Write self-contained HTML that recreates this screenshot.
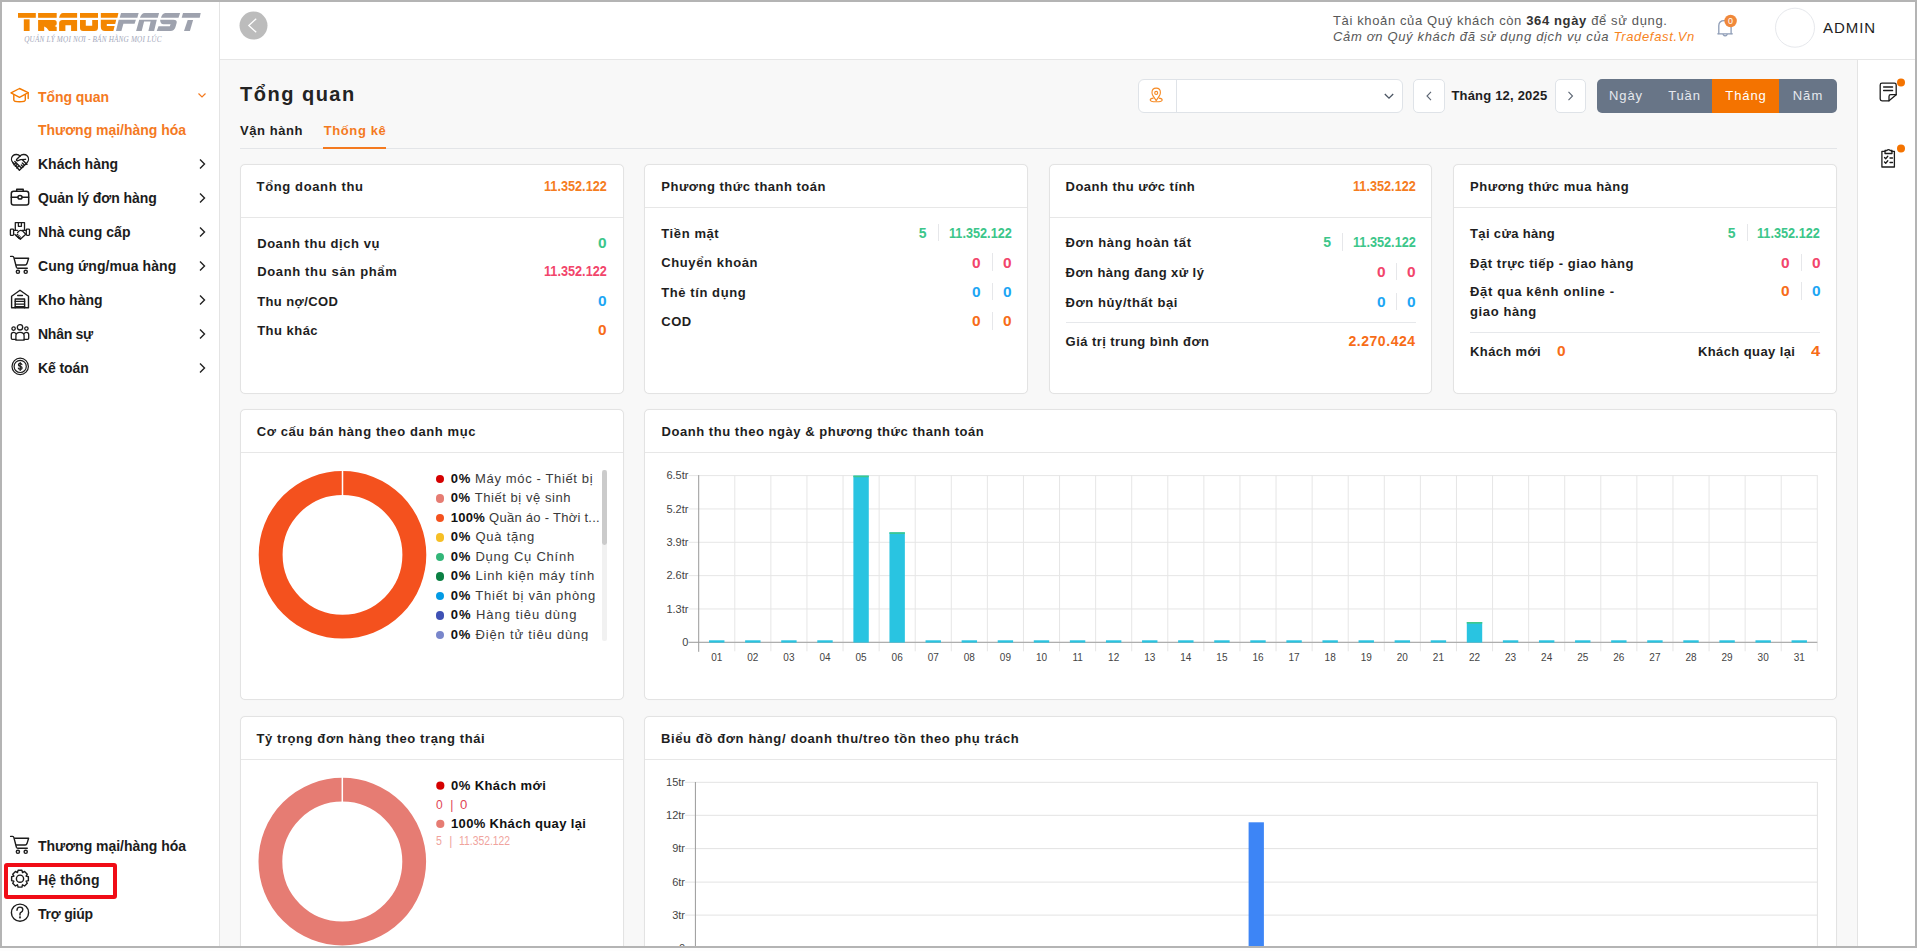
<!DOCTYPE html>
<html><head><meta charset="utf-8">
<style>
html,body{margin:0;padding:0;}
body{width:1917px;height:951px;position:relative;overflow:hidden;background:#fff;font-family:"Liberation Sans", sans-serif;}
.t{position:absolute;line-height:1;white-space:nowrap;}
svg.ov{position:absolute;left:0;top:0;}
</style></head><body>
<div style="position:absolute;left:220px;top:59px;width:1637px;height:889px;background:#f8f8f8;"></div>
<div style="position:absolute;left:220px;top:2px;width:1695px;height:57px;background:#fff;border-bottom:1px solid #e6e6e6;"></div>
<div style="position:absolute;left:2px;top:2px;width:217px;height:946px;background:#fff;border-right:1px solid #e4e4e4;"></div>
<div style="position:absolute;left:1857px;top:60px;width:58px;height:888px;background:#fff;border-left:1px solid #e4e4e4;"></div>
<div style="position:absolute;left:24.2px;top:37.4px;font-family:'Liberation Serif',serif;font-style:italic;font-size:7.2px;line-height:1;color:#a3a8bb;white-space:nowrap;letter-spacing:0.19px">QUẢN LÝ MỌI NƠI - BÁN HÀNG MỌI LÚC</div>
<div class="t" style="left:38.00px;top:90.05px;font-size:14px;font-weight:700;color:#f47a1f;letter-spacing:-0.061px;">Tổng quan</div>
<div class="t" style="left:38.00px;top:123.05px;font-size:14px;font-weight:700;color:#f47a1f;letter-spacing:-0.022px;">Thương mại/hàng hóa</div>
<div class="t" style="left:38.00px;top:156.75px;font-size:14px;font-weight:700;color:#1c1c1c;letter-spacing:-0.013px;">Khách hàng</div>
<div class="t" style="left:38.00px;top:190.75px;font-size:14px;font-weight:700;color:#1c1c1c;letter-spacing:-0.058px;">Quản lý đơn hàng</div>
<div class="t" style="left:38.00px;top:224.75px;font-size:14px;font-weight:700;color:#1c1c1c;letter-spacing:0.059px;">Nhà cung cấp</div>
<div class="t" style="left:38.00px;top:258.75px;font-size:14px;font-weight:700;color:#1c1c1c;letter-spacing:0.088px;">Cung ứng/mua hàng</div>
<div class="t" style="left:38.00px;top:292.75px;font-size:14px;font-weight:700;color:#1c1c1c;letter-spacing:-0.006px;">Kho hàng</div>
<div class="t" style="left:38.00px;top:326.75px;font-size:14px;font-weight:700;color:#1c1c1c;letter-spacing:-0.261px;">Nhân sự</div>
<div class="t" style="left:38.00px;top:360.75px;font-size:14px;font-weight:700;color:#1c1c1c;letter-spacing:-0.106px;">Kế toán</div>
<div class="t" style="left:38.00px;top:839.05px;font-size:14px;font-weight:700;color:#1c1c1c;letter-spacing:-0.022px;">Thương mại/hàng hóa</div>
<div class="t" style="left:38.00px;top:873.05px;font-size:14px;font-weight:700;color:#1c1c1c;letter-spacing:0.130px;">Hệ thống</div>
<div class="t" style="left:38.00px;top:907.25px;font-size:14px;font-weight:700;color:#1c1c1c;letter-spacing:-0.228px;">Trợ giúp</div>
<div style="position:absolute;left:4px;top:862.5px;width:113px;height:36px;box-sizing:border-box;border:4px solid #f00c16;border-radius:3px;"></div>
<div class="t" style="left:1333.00px;top:14.00px;font-size:13px;font-weight:400;color:#585858;letter-spacing:0.629px;">Tài khoản của Quý khách còn <b style="color:#333">364 ngày</b> để sử dụng.</div>
<div class="t" style="left:1333.00px;top:29.50px;font-size:13px;font-weight:400;color:#585858;letter-spacing:0.667px;font-style:italic;">Cảm ơn Quý khách đã sử dụng dịch vụ của <span style="color:#f7841e">Tradefast.Vn</span></div>
<div class="t" style="left:1823.00px;top:20.10px;font-size:15px;font-weight:400;color:#1e1e1e;letter-spacing:0.931px;">ADMIN</div>
<div class="t" style="left:240.00px;top:84.07px;font-size:20px;font-weight:700;color:#232323;letter-spacing:1.500px;">Tổng quan</div>
<div class="t" style="left:240.00px;top:123.70px;font-size:13px;font-weight:700;color:#1e1e1e;letter-spacing:0.561px;">Vận hành</div>
<div class="t" style="left:323.70px;top:123.70px;font-size:13px;font-weight:700;color:#f47a1f;letter-spacing:0.615px;">Thống kê</div>
<div style="position:absolute;left:240px;top:148px;width:1597px;height:1px;background:#e3e5e8;"></div>
<div style="position:absolute;left:323px;top:147px;width:63px;height:2px;background:#f47a1f;"></div>
<div style="position:absolute;left:1138px;top:79px;width:265px;height:34px;box-sizing:border-box;background:#fff;border:1px solid #dfe3e8;border-radius:6px;"></div>
<div style="position:absolute;left:1176px;top:80px;width:1px;height:32px;background:#dfe3e8;"></div>
<div style="position:absolute;left:1413px;top:79px;width:32px;height:34px;box-sizing:border-box;background:#fff;border:1px solid #dfe3e8;border-radius:5px;"></div>
<div style="position:absolute;left:1555px;top:79px;width:31px;height:34px;box-sizing:border-box;background:#fff;border:1px solid #dfe3e8;border-radius:5px;"></div>
<div class="t" style="left:1451.40px;top:88.60px;font-size:13px;font-weight:700;color:#1e1e1e;letter-spacing:0.199px;">Tháng 12, 2025</div>
<div style="position:absolute;left:1597px;top:79px;width:240px;height:34px;background:#687587;border-radius:5px;overflow:hidden;"></div>
<div style="position:absolute;left:1712px;top:79px;width:67px;height:34px;background:#f47300;"></div>
<div class="t" style="left:1609.00px;top:89.00px;font-size:13px;font-weight:400;color:#e6e9ee;letter-spacing:0.911px;">Ngày</div>
<div class="t" style="left:1668.17px;top:89.00px;font-size:13px;font-weight:400;color:#e6e9ee;letter-spacing:0.875px;">Tuần</div>
<div class="t" style="left:1725.35px;top:89.00px;font-size:13px;font-weight:400;color:#ffffff;letter-spacing:0.885px;">Tháng</div>
<div class="t" style="left:1792.63px;top:89.00px;font-size:13px;font-weight:400;color:#e6e9ee;letter-spacing:1.098px;">Năm</div>
<div style="position:absolute;left:240px;top:164px;width:384px;height:230px;box-sizing:border-box;background:#fff;border:1px solid #e3e3e3;border-radius:5px;box-shadow:0 0 1px rgba(0,0,0,0.06);"></div>
<div style="position:absolute;left:241px;top:217px;width:382px;height:1px;background:#e7e7e7;"></div>
<div style="position:absolute;left:644px;top:164px;width:384px;height:230px;box-sizing:border-box;background:#fff;border:1px solid #e3e3e3;border-radius:5px;box-shadow:0 0 1px rgba(0,0,0,0.06);"></div>
<div style="position:absolute;left:645px;top:207px;width:382px;height:1px;background:#e7e7e7;"></div>
<div style="position:absolute;left:1049px;top:164px;width:383px;height:230px;box-sizing:border-box;background:#fff;border:1px solid #e3e3e3;border-radius:5px;box-shadow:0 0 1px rgba(0,0,0,0.06);"></div>
<div style="position:absolute;left:1050px;top:217px;width:381px;height:1px;background:#e7e7e7;"></div>
<div style="position:absolute;left:1453px;top:164px;width:384px;height:230px;box-sizing:border-box;background:#fff;border:1px solid #e3e3e3;border-radius:5px;box-shadow:0 0 1px rgba(0,0,0,0.06);"></div>
<div style="position:absolute;left:1454px;top:207px;width:382px;height:1px;background:#e7e7e7;"></div>
<div class="t" style="left:256.60px;top:179.60px;font-size:13px;font-weight:700;color:#1e1e1e;letter-spacing:0.628px;">Tổng doanh thu</div>
<div class="t" style="left:543.60px;top:178.75px;font-size:14px;font-weight:700;color:#f57d1f;transform:scaleX(0.9062);transform-origin:left;">11.352.122</div>
<div class="t" style="left:257.20px;top:236.70px;font-size:13px;font-weight:700;color:#1e1e1e;letter-spacing:0.553px;">Doanh thu dịch vụ</div>
<div class="t" style="left:597.80px;top:235.85px;font-size:14px;font-weight:700;color:#3cc68a;transform:scaleX(1.103);transform-origin:left;">0</div>
<div class="t" style="left:257.20px;top:265.10px;font-size:13px;font-weight:700;color:#1e1e1e;letter-spacing:0.647px;">Doanh thu sản phẩm</div>
<div class="t" style="left:543.60px;top:264.25px;font-size:14px;font-weight:700;color:#f2456b;transform:scaleX(0.9062);transform-origin:left;">11.352.122</div>
<div class="t" style="left:257.20px;top:294.80px;font-size:13px;font-weight:700;color:#1e1e1e;letter-spacing:0.397px;">Thu nợ/COD</div>
<div class="t" style="left:597.80px;top:293.95px;font-size:14px;font-weight:700;color:#1ea6f4;transform:scaleX(1.103);transform-origin:left;">0</div>
<div class="t" style="left:257.20px;top:323.80px;font-size:13px;font-weight:700;color:#1e1e1e;letter-spacing:0.478px;">Thu khác</div>
<div class="t" style="left:597.80px;top:322.95px;font-size:14px;font-weight:700;color:#f76c17;transform:scaleX(1.103);transform-origin:left;">0</div>
<div class="t" style="left:661.30px;top:179.60px;font-size:13px;font-weight:700;color:#1e1e1e;letter-spacing:0.498px;">Phương thức thanh toán</div>
<div class="t" style="left:661.30px;top:226.60px;font-size:13px;font-weight:700;color:#1e1e1e;letter-spacing:0.598px;">Tiền mặt</div>
<div class="t" style="left:948.50px;top:225.75px;font-size:14px;font-weight:700;color:#3cc68a;transform:scaleX(0.9062);transform-origin:left;">11.352.122</div>
<div style="position:absolute;left:937.8px;top:223.6px;width:1px;height:17.5px;background:#e6e7ea;"></div>
<div class="t" style="left:918.80px;top:225.75px;font-size:14px;font-weight:700;color:#3cc68a;">5</div>
<div class="t" style="left:661.30px;top:256.40px;font-size:13px;font-weight:700;color:#1e1e1e;letter-spacing:0.602px;">Chuyển khoản</div>
<div class="t" style="left:1002.70px;top:255.55px;font-size:14px;font-weight:700;color:#f2456b;transform:scaleX(1.103);transform-origin:left;">0</div>
<div style="position:absolute;left:992.0px;top:253.39999999999998px;width:1px;height:17.5px;background:#e6e7ea;"></div>
<div class="t" style="left:972.40px;top:255.55px;font-size:14px;font-weight:700;color:#f2456b;transform:scaleX(1.103);transform-origin:left;">0</div>
<div class="t" style="left:661.30px;top:285.50px;font-size:13px;font-weight:700;color:#1e1e1e;letter-spacing:0.576px;">Thẻ tín dụng</div>
<div class="t" style="left:1002.70px;top:284.65px;font-size:14px;font-weight:700;color:#1ea6f4;transform:scaleX(1.103);transform-origin:left;">0</div>
<div style="position:absolute;left:992.0px;top:282.5px;width:1px;height:17.5px;background:#e6e7ea;"></div>
<div class="t" style="left:972.40px;top:284.65px;font-size:14px;font-weight:700;color:#1ea6f4;transform:scaleX(1.103);transform-origin:left;">0</div>
<div class="t" style="left:661.30px;top:315.00px;font-size:13px;font-weight:700;color:#1e1e1e;letter-spacing:0.470px;">COD</div>
<div class="t" style="left:1002.70px;top:314.15px;font-size:14px;font-weight:700;color:#f76c17;transform:scaleX(1.103);transform-origin:left;">0</div>
<div style="position:absolute;left:992.0px;top:312px;width:1px;height:17.5px;background:#e6e7ea;"></div>
<div class="t" style="left:972.40px;top:314.15px;font-size:14px;font-weight:700;color:#f76c17;transform:scaleX(1.103);transform-origin:left;">0</div>
<div class="t" style="left:1065.60px;top:179.60px;font-size:13px;font-weight:700;color:#1e1e1e;letter-spacing:0.472px;">Doanh thu ước tính</div>
<div class="t" style="left:1352.90px;top:178.75px;font-size:14px;font-weight:700;color:#f57d1f;transform:scaleX(0.9062);transform-origin:left;">11.352.122</div>
<div class="t" style="left:1065.60px;top:236.30px;font-size:13px;font-weight:700;color:#1e1e1e;letter-spacing:0.623px;">Đơn hàng hoàn tất</div>
<div class="t" style="left:1352.90px;top:235.45px;font-size:14px;font-weight:700;color:#3cc68a;transform:scaleX(0.9062);transform-origin:left;">11.352.122</div>
<div style="position:absolute;left:1342.2px;top:233.3px;width:1px;height:17.5px;background:#e6e7ea;"></div>
<div class="t" style="left:1323.20px;top:235.45px;font-size:14px;font-weight:700;color:#3cc68a;">5</div>
<div class="t" style="left:1065.60px;top:265.50px;font-size:13px;font-weight:700;color:#1e1e1e;letter-spacing:0.426px;">Đơn hàng đang xử lý</div>
<div class="t" style="left:1407.10px;top:264.65px;font-size:14px;font-weight:700;color:#f2456b;transform:scaleX(1.103);transform-origin:left;">0</div>
<div style="position:absolute;left:1396.4px;top:262.5px;width:1px;height:17.5px;background:#e6e7ea;"></div>
<div class="t" style="left:1376.80px;top:264.65px;font-size:14px;font-weight:700;color:#f2456b;transform:scaleX(1.103);transform-origin:left;">0</div>
<div class="t" style="left:1065.60px;top:295.50px;font-size:13px;font-weight:700;color:#1e1e1e;letter-spacing:0.572px;">Đơn hủy/thất bại</div>
<div class="t" style="left:1407.10px;top:294.65px;font-size:14px;font-weight:700;color:#1ea6f4;transform:scaleX(1.103);transform-origin:left;">0</div>
<div style="position:absolute;left:1396.4px;top:292.5px;width:1px;height:17.5px;background:#e6e7ea;"></div>
<div class="t" style="left:1376.80px;top:294.65px;font-size:14px;font-weight:700;color:#1ea6f4;transform:scaleX(1.103);transform-origin:left;">0</div>
<div style="position:absolute;left:1065.5px;top:321.5px;width:350.5px;height:1px;background:#e6e8eb;"></div>
<div class="t" style="left:1065.60px;top:335.20px;font-size:13px;font-weight:700;color:#1e1e1e;letter-spacing:0.442px;">Giá trị trung bình đơn</div>
<div class="t" style="left:1348.40px;top:334.35px;font-size:14px;font-weight:700;color:#f76c17;letter-spacing:0.556px;">2.270.424</div>
<div class="t" style="left:1470.10px;top:180.00px;font-size:13px;font-weight:700;color:#1e1e1e;letter-spacing:0.526px;">Phương thức mua hàng</div>
<div class="t" style="left:1470.10px;top:226.70px;font-size:13px;font-weight:700;color:#1e1e1e;letter-spacing:0.339px;">Tại cửa hàng</div>
<div class="t" style="left:1757.40px;top:225.85px;font-size:14px;font-weight:700;color:#3cc68a;transform:scaleX(0.9062);transform-origin:left;">11.352.122</div>
<div style="position:absolute;left:1746.7px;top:223.7px;width:1px;height:17.5px;background:#e6e7ea;"></div>
<div class="t" style="left:1727.70px;top:225.85px;font-size:14px;font-weight:700;color:#3cc68a;">5</div>
<div class="t" style="left:1470.10px;top:256.80px;font-size:13px;font-weight:700;color:#1e1e1e;letter-spacing:0.549px;">Đặt trực tiếp - giao hàng</div>
<div class="t" style="left:1811.60px;top:255.95px;font-size:14px;font-weight:700;color:#f2456b;transform:scaleX(1.103);transform-origin:left;">0</div>
<div style="position:absolute;left:1800.9px;top:253.8px;width:1px;height:17.5px;background:#e6e7ea;"></div>
<div class="t" style="left:1781.30px;top:255.95px;font-size:14px;font-weight:700;color:#f2456b;transform:scaleX(1.103);transform-origin:left;">0</div>
<div class="t" style="left:1470.10px;top:285.20px;font-size:13px;font-weight:700;color:#1e1e1e;letter-spacing:0.621px;">Đặt qua kênh online -</div>
<div class="t" style="left:1811.60px;top:284.35px;font-size:14px;font-weight:700;color:#1ea6f4;transform:scaleX(1.103);transform-origin:left;">0</div>
<div style="position:absolute;left:1800.9px;top:282.2px;width:1px;height:17.5px;background:#e6e7ea;"></div>
<div class="t" style="left:1781.30px;top:284.35px;font-size:14px;font-weight:700;color:#f76c17;transform:scaleX(1.103);transform-origin:left;">0</div>
<div class="t" style="left:1470.10px;top:304.70px;font-size:13px;font-weight:700;color:#1e1e1e;letter-spacing:0.590px;">giao hàng</div>
<div style="position:absolute;left:1469.7px;top:331.5px;width:350.5px;height:1px;background:#e6e8eb;"></div>
<div class="t" style="left:1470.10px;top:345.10px;font-size:13px;font-weight:700;color:#1e1e1e;letter-spacing:0.359px;">Khách mới</div>
<div class="t" style="left:1557.20px;top:344.25px;font-size:14px;font-weight:700;color:#f76c17;transform:scaleX(1.103);transform-origin:left;">0</div>
<div class="t" style="left:1698.00px;top:345.10px;font-size:13px;font-weight:700;color:#1e1e1e;letter-spacing:0.396px;">Khách quay lại</div>
<div class="t" style="left:1810.80px;top:344.25px;font-size:14px;font-weight:700;color:#f76c17;transform:scaleX(1.180);transform-origin:left;">4</div>
<div style="position:absolute;left:240px;top:409px;width:384px;height:291px;box-sizing:border-box;background:#fff;border:1px solid #e3e3e3;border-radius:5px;box-shadow:0 0 1px rgba(0,0,0,0.06);"></div>
<div style="position:absolute;left:241px;top:452px;width:382px;height:1px;background:#e7e7e7;"></div>
<div style="position:absolute;left:644px;top:409px;width:1193px;height:291px;box-sizing:border-box;background:#fff;border:1px solid #e3e3e3;border-radius:5px;box-shadow:0 0 1px rgba(0,0,0,0.06);"></div>
<div style="position:absolute;left:645px;top:452px;width:1191px;height:1px;background:#e7e7e7;"></div>
<div class="t" style="left:256.70px;top:424.90px;font-size:13px;font-weight:700;color:#1e1e1e;letter-spacing:0.597px;">Cơ cấu bán hàng theo danh mục</div>
<div class="t" style="left:661.50px;top:424.90px;font-size:13px;font-weight:700;color:#1e1e1e;letter-spacing:0.544px;">Doanh thu theo ngày &amp; phương thức thanh toán</div>
<div style="position:absolute;left:430px;top:469px;width:172px;height:172px;overflow:hidden;">
<div style="position:absolute;left:5.800000000000011px;top:6.00px;width:8.4px;height:8.4px;border-radius:50%;background:#d50000"></div>
<div class="t" style="left:20.80px;top:3.00px;font-size:13px;font-weight:400;color:#3a3a3a;letter-spacing:0.634px;"><b style="color:#111">0%</b> Máy móc - Thiết bị</div>
<div style="position:absolute;left:5.800000000000011px;top:25.47px;width:8.4px;height:8.4px;border-radius:50%;background:#e67c73"></div>
<div class="t" style="left:20.80px;top:22.47px;font-size:13px;font-weight:400;color:#3a3a3a;letter-spacing:0.563px;"><b style="color:#111">0%</b> Thiết bị vệ sinh</div>
<div style="position:absolute;left:5.800000000000011px;top:44.94px;width:8.4px;height:8.4px;border-radius:50%;background:#f4511e"></div>
<div class="t" style="left:20.80px;top:41.94px;font-size:13px;font-weight:400;color:#3a3a3a;letter-spacing:0.271px;"><b style="color:#111">100%</b> Quần áo - Thời t...</div>
<div style="position:absolute;left:5.800000000000011px;top:64.41px;width:8.4px;height:8.4px;border-radius:50%;background:#f6bf26"></div>
<div class="t" style="left:20.80px;top:61.41px;font-size:13px;font-weight:400;color:#3a3a3a;letter-spacing:0.763px;"><b style="color:#111">0%</b> Quà tặng</div>
<div style="position:absolute;left:5.800000000000011px;top:83.88px;width:8.4px;height:8.4px;border-radius:50%;background:#33b679"></div>
<div class="t" style="left:20.80px;top:80.88px;font-size:13px;font-weight:400;color:#3a3a3a;letter-spacing:0.754px;"><b style="color:#111">0%</b> Dụng Cụ Chính</div>
<div style="position:absolute;left:5.800000000000011px;top:103.35px;width:8.4px;height:8.4px;border-radius:50%;background:#0b8043"></div>
<div class="t" style="left:20.80px;top:100.35px;font-size:13px;font-weight:400;color:#3a3a3a;letter-spacing:0.780px;"><b style="color:#111">0%</b> Linh kiện máy tính</div>
<div style="position:absolute;left:5.800000000000011px;top:122.82px;width:8.4px;height:8.4px;border-radius:50%;background:#039be5"></div>
<div class="t" style="left:20.80px;top:119.82px;font-size:13px;font-weight:400;color:#3a3a3a;letter-spacing:0.769px;"><b style="color:#111">0%</b> Thiết bị văn phòng</div>
<div style="position:absolute;left:5.800000000000011px;top:142.29px;width:8.4px;height:8.4px;border-radius:50%;background:#3f51b5"></div>
<div class="t" style="left:20.80px;top:139.29px;font-size:13px;font-weight:400;color:#3a3a3a;letter-spacing:0.936px;"><b style="color:#111">0%</b> Hàng tiêu dùng</div>
<div style="position:absolute;left:5.800000000000011px;top:161.76px;width:8.4px;height:8.4px;border-radius:50%;background:#7986cb"></div>
<div class="t" style="left:20.80px;top:158.76px;font-size:13px;font-weight:400;color:#3a3a3a;letter-spacing:0.801px;"><b style="color:#111">0%</b> Điện tử tiêu dùng</div>
</div>
<div style="position:absolute;left:602.3px;top:469.5px;width:4.8px;height:171.5px;background:#f1f1f1;border-radius:2px;"></div>
<div style="position:absolute;left:602.3px;top:469.5px;width:4.8px;height:75px;background:#cbcbcb;border-radius:2.4px;"></div>
<div style="position:absolute;left:240px;top:716px;width:384px;height:260px;box-sizing:border-box;background:#fff;border:1px solid #e3e3e3;border-radius:5px;box-shadow:0 0 1px rgba(0,0,0,0.06);"></div>
<div style="position:absolute;left:241px;top:759px;width:382px;height:1px;background:#e7e7e7;"></div>
<div style="position:absolute;left:644px;top:716px;width:1193px;height:260px;box-sizing:border-box;background:#fff;border:1px solid #e3e3e3;border-radius:5px;box-shadow:0 0 1px rgba(0,0,0,0.06);"></div>
<div style="position:absolute;left:645px;top:759px;width:1191px;height:1px;background:#e7e7e7;"></div>
<div class="t" style="left:256.40px;top:731.80px;font-size:13px;font-weight:700;color:#1e1e1e;letter-spacing:0.594px;">Tỷ trọng đơn hàng theo trạng thái</div>
<div class="t" style="left:661.00px;top:731.60px;font-size:13px;font-weight:700;color:#1e1e1e;letter-spacing:0.616px;">Biểu đồ đơn hàng/ doanh thu/treo tồn theo phụ trách</div>
<div class="t" style="left:451.00px;top:778.60px;font-size:13px;font-weight:700;color:#111;letter-spacing:0.429px;">0% Khách mới</div>
<div class="t" style="left:436.00px;top:798.64px;font-size:12px;font-weight:400;color:#df4454;">0</div>
<div class="t" style="left:450.30px;top:798.64px;font-size:12px;font-weight:400;color:#df4454;">|</div>
<div class="t" style="left:460.20px;top:798.64px;font-size:12px;font-weight:400;color:#df4454;transform:scaleX(1.092);transform-origin:left;">0</div>
<div class="t" style="left:451.00px;top:816.50px;font-size:13px;font-weight:700;color:#111;letter-spacing:0.346px;">100% Khách quay lại</div>
<div class="t" style="left:436.00px;top:835.44px;font-size:12px;font-weight:400;color:#f0a39d;transform:scaleX(0.882);transform-origin:left;">5</div>
<div class="t" style="left:449.20px;top:835.44px;font-size:12px;font-weight:400;color:#f0a39d;">|</div>
<div class="t" style="left:458.80px;top:835.44px;font-size:12px;font-weight:400;color:#f0a39d;transform:scaleX(0.8636);transform-origin:left;">11.352.122</div>
<svg class="ov" width="1917" height="951" viewBox="0 0 1917 951">
<g fill="#f38600">
<rect x="18" y="13" width="17.8" height="4.8"/>
<rect x="23.8" y="19.3" width="5.8" height="11.7"/>
<rect x="38.1" y="13" width="18.6" height="4.8"/>
<path d="M38.1 20.1 H54.2 Q56.7 20.1 56.7 22.6 V24 Q56.7 25.6 54.6 26 L56.7 27 V31 H49 Q47 27.5 44.2 26.6 V31 H38.1 Z"/>
<path d="M63 13 H77.1 V17.8 H59.1 Q60 13.2 63 13 Z"/>
<path d="M62.5 20.1 H77.1 V31 H71.1 V25.3 H65.4 V31 H59.1 V23.6 Q59.1 20.1 62.5 20.1 Z"/>
<rect x="80" y="13" width="18" height="4.8"/>
<path d="M80 20.1 H85.8 V25.8 H92.2 V20.1 H98 V27.5 Q98 31 94.5 31 H83 Q80 31 80 28 Z"/>
<path d="M100.8 13.1 H118.4 L117.4 17.8 H100.8 Z"/>
<path d="M100.8 19.85 H116.2 L115.2 23.9 H106.8 V26 H114.6 L113.4 30.9 H105 Q100.8 30.9 100.8 26.7 Z"/>
</g>
<g fill="#9ea2ae">
<path d="M121 13.1 H138.6 L137.4 17.8 H119.7 Z"/>
<path d="M118.7 19.85 H135.9 L134.6 23.7 H123.4 L121.4 30.9 H116 Z"/>
<path d="M144.7 13.1 H159.1 L157.8 17.8 H139.9 Q141.5 13.3 144.7 13.1 Z"/>
<path d="M139.2 19.85 H156.8 L154.1 30.9 H148.4 L150.6 21.6 H144.1 L141.7 30.9 H136.1 Z"/>
<path d="M165.2 13.1 H180.1 L178.5 17.7 H161 Q162.3 13.4 165.2 13.1 Z"/>
<path d="M160.1 19.8 H173.4 Q177.2 19.8 176.7 22.8 L175.4 27.3 Q174.3 30.9 170.5 30.9 H156.7 L158.5 26.2 H169.8 L170.6 24.3 H163.6 Q160.3 24.3 160.1 19.8 Z"/>
<path d="M183 13.1 H200.7 L199.7 17.7 H181.7 Z"/>
<path d="M187.7 20.1 H193.1 L189.9 30.9 H184 Z"/>
</g>
<path d="M198.5 93.5 L202 97 L205.5 93.5" fill="none" stroke="#f47a1f" stroke-width="1.2"/>
<path d="M200 159.5 L204.5 164 L200 168.5" fill="none" stroke="#222" stroke-width="1.4"/>
<path d="M200 193.5 L204.5 198 L200 202.5" fill="none" stroke="#222" stroke-width="1.4"/>
<path d="M200 227.5 L204.5 232 L200 236.5" fill="none" stroke="#222" stroke-width="1.4"/>
<path d="M200 261.5 L204.5 266 L200 270.5" fill="none" stroke="#222" stroke-width="1.4"/>
<path d="M200 295.5 L204.5 300 L200 304.5" fill="none" stroke="#222" stroke-width="1.4"/>
<path d="M200 329.5 L204.5 334 L200 338.5" fill="none" stroke="#222" stroke-width="1.4"/>
<path d="M200 363.5 L204.5 368 L200 372.5" fill="none" stroke="#222" stroke-width="1.4"/>
<g fill="none" stroke="#f47a00" stroke-width="1.4" stroke-linejoin="round" stroke-linecap="round"><path d="M19.5 88.5 L28.2 92.6 L19.5 97.3 L11 92.9 Z"/><path d="M13.8 95 V100 Q13.8 101.8 19.5 101.8 Q25.3 101.8 25.3 100 V95"/><path d="M28.2 92.6 V98.5"/></g>
<g transform="translate(8,151)" fill="none" stroke="#1c1c1c" stroke-width="1.35" stroke-linecap="round" stroke-linejoin="round"><path d="M12 5 C10.3 3.2 6.8 2.9 4.9 4.8 C3 6.7 3.1 9.8 5 11.8"/><path d="M12 5 C13.7 3.2 17.2 2.9 19.1 4.8 C21 6.7 20.9 9.8 19 11.8 L18.3 12.6"/><path d="M12 5 L8.6 8.4 Q8.1 9.6 9.4 9.8 L12.6 8.7 L17.6 8.3"/><path d="M14.6 9 L19 13.4 M6.8 10.4 L13.6 17.2 M5 11.8 L11.4 19.2 L13.2 17.6 L18.3 12.6"/><path d="M5.9 13.7 L7.6 12 M7.3 15.3 L9 13.6 M8.8 17 L10.5 15.3 M14.3 12.1 L16.5 14.3 M13.3 14 L15.2 15.9"/></g>
<g transform="translate(8,185)" fill="none" stroke="#1c1c1c" stroke-width="1.5" stroke-linecap="round" stroke-linejoin="round"><rect x="3.3" y="6.2" width="17.4" height="13.8" rx="2.3"/><path d="M8.7 6.2 V4.2 H15.2 V6.2"/><path d="M3.3 12.2 H9.8 M14.2 12.2 H20.7"/><ellipse cx="12" cy="12.2" rx="2.1" ry="1.8"/></g>
<g transform="translate(8,219)" fill="none" stroke="#1c1c1c" stroke-width="1.3" stroke-linecap="round" stroke-linejoin="round"><path d="M7.3 10.9 V3.6 H16.5 V10.9"/><path d="M10.4 3.6 V7.3 H13.4 V3.6"/><rect x="2.4" y="10.2" width="3.2" height="6.2" rx="0.8"/><rect x="18.3" y="10.2" width="3.2" height="6.2" rx="0.8"/><path d="M5.6 11.3 H9.5 M14 11.3 H18.3"/><path d="M9.6 13.6 Q11.5 10.3 14.5 11.9 L17.8 15.3 L12.3 20.3 L6.9 15.4"/><path d="M8.3 16.8 L9.8 15.3 M9.6 18.1 L11.1 16.6 M10.9 19.3 L12.3 17.9"/></g>
<g transform="translate(8,253)" fill="none" stroke="#1c1c1c" stroke-width="1.4" stroke-linecap="round" stroke-linejoin="round"><path d="M2.6 3.4 H4.6 Q5.6 3.4 5.9 4.6 L8.4 14.2 Q8.8 15.2 9.8 15.2 H19.3"/><path d="M6.8 5.2 H20.6 L19 10.6 Q18.5 12 17.2 12 H8.4"/><circle cx="9.9" cy="18.8" r="1.6"/><circle cx="17.7" cy="18.8" r="1.6"/></g>
<g transform="translate(8,833)" fill="none" stroke="#1c1c1c" stroke-width="1.4" stroke-linecap="round" stroke-linejoin="round"><path d="M2.6 3.4 H4.6 Q5.6 3.4 5.9 4.6 L8.4 14.2 Q8.8 15.2 9.8 15.2 H19.3"/><path d="M6.8 5.2 H20.6 L19 10.6 Q18.5 12 17.2 12 H8.4"/><circle cx="9.9" cy="18.8" r="1.6"/><circle cx="17.7" cy="18.8" r="1.6"/></g>
<g transform="translate(8,287)" fill="none" stroke="#1c1c1c" stroke-width="1.4" stroke-linecap="round" stroke-linejoin="round"><path d="M3.6 20.8 V9.2 L12 3.2 L20.5 9.2 V20.8 Z"/><path d="M9.7 8.5 H14.4"/><path d="M7.2 20.8 V12 H16.6 V20.8"/><path d="M7.2 14.4 H16.6 M7.2 17.1 H16.6 M7.2 19.8 H16.6"/></g>
<g transform="translate(8,321)" fill="none" stroke="#1c1c1c" stroke-width="1.3" stroke-linecap="round" stroke-linejoin="round"><circle cx="12" cy="6.3" r="2.7"/><circle cx="5.6" cy="7.6" r="1.7"/><circle cx="18.4" cy="7.6" r="1.7"/><path d="M7.9 19.2 V14.8 Q7.9 11.3 12 11.3 Q16.1 11.3 16.1 14.8 V19.2 Z"/><path d="M7.9 18.3 H4.4 Q3.3 18.3 3.3 17.2 V13.6 Q3.3 11.4 5.6 11.4 Q7.2 11.4 7.9 12.6"/><path d="M16.1 18.3 H19.6 Q20.7 18.3 20.7 17.2 V13.6 Q20.7 11.4 18.4 11.4 Q16.8 11.4 16.1 12.6"/></g>
<g transform="translate(8,355)" fill="none" stroke="#1c1c1c" stroke-width="1.2" stroke-linecap="round" stroke-linejoin="round"><circle cx="12.2" cy="11.4" r="8.2"/><circle cx="12.2" cy="11.4" r="6.1"/><path d="M13.9 9.6 Q13.6 8.4 12.2 8.4 Q10.4 8.4 10.4 9.8 Q10.4 11 12.2 11.3 Q14.1 11.7 14.1 13 Q14.1 14.4 12.2 14.4 Q10.6 14.4 10.3 13.2 M12.2 7.4 V15.4"/></g>
<g transform="translate(8,867)" fill="none" stroke="#1c1c1c" stroke-width="1.4" stroke-linecap="round" stroke-linejoin="round"><path d="M10.07 3.32 L13.93 3.32 L14.53 5.60 L16.56 4.41 L19.29 7.14 L18.10 9.17 L20.38 9.77 L20.38 13.63 L18.10 14.23 L19.29 16.26 L16.56 18.99 L14.53 17.80 L13.93 20.08 L10.07 20.08 L9.47 17.80 L7.44 18.99 L4.71 16.26 L5.90 14.23 L3.62 13.63 L3.62 9.77 L5.90 9.17 L4.71 7.14 L7.44 4.41 L9.47 5.60 Z"/><circle cx="12" cy="11.7" r="3.6"/></g>
<g transform="translate(8,901)" fill="none" stroke="#1c1c1c" stroke-width="1.4" stroke-linecap="round" stroke-linejoin="round"><circle cx="12" cy="11.7" r="8.6"/><path d="M9 9.2 Q9 6.1 12 6.1 Q14.8 6.1 14.8 8.7 Q14.8 10.4 12.6 11.6 Q12 12 12 13 V14"/><circle cx="12" cy="16.4" r="0.4"/></g>
<circle cx="253.5" cy="25.6" r="14" fill="#bcbcbc"/>
<path d="M256.2 18.8 L248.8 25.5 L256.2 32.2" fill="none" stroke="#fff" stroke-width="1.3"/>
<g fill="none" stroke="#8d9cb6" stroke-width="1.3" stroke-linejoin="round" stroke-linecap="round"><path d="M1718.8 33.6 V25.8 Q1718.8 20.6 1724.3 20.6 H1725.6 Q1731.1 20.6 1731.1 25.8 V33.6"/><path d="M1717.8 33.8 H1732.3"/><path d="M1723.2 34.6 Q1725.1 37.3 1727.1 34.6"/></g>
<circle cx="1730.6" cy="21" r="6.2" fill="#f0883a"/>
<text x="1730.6" y="24.3" font-family="Liberation Sans" font-size="9" text-anchor="middle" fill="#fff">0</text>
<circle cx="1795" cy="27.7" r="19.5" fill="#fff" stroke="#e6e8ec" stroke-width="1"/>
<g fill="none" stroke="#f68a24" stroke-width="1.1" stroke-linejoin="round"><path d="M1156.2 100.6 L1152.9 95.6 Q1152 94.2 1152 92.4 Q1152 88.1 1156.2 88.1 Q1160.4 88.1 1160.4 92.4 Q1160.4 94.2 1159.5 95.6 Z"/><circle cx="1156.2" cy="92.9" r="1.5"/><path d="M1153.6 98.1 Q1150.2 98.4 1150.2 100 Q1150.2 101.8 1156.2 101.8 Q1162.2 101.8 1162.2 100 Q1162.2 98.4 1158.8 98.1"/></g>
<path d="M1431 91.8 L1427 96 L1431 100.2" fill="none" stroke="#5b6472" stroke-width="1.1"/>
<path d="M1568.5 91.8 L1572.5 96 L1568.5 100.2" fill="none" stroke="#5b6472" stroke-width="1.1"/>
<path d="M1384.8 94 L1389 98.2 L1393.2 94" fill="none" stroke="#4b5563" stroke-width="1.3"/>
<g fill="none" stroke="#1c1c1c" stroke-width="1.3" stroke-linecap="round" stroke-linejoin="round" stroke-width="1.7"><path d="M1889 100.8 H1882 Q1880.2 100.8 1880.2 99 V85 Q1880.2 83.2 1882 83.2 H1894.4 Q1896.2 83.2 1896.2 85 V94.7 Z"/><path d="M1889 100.8 V96.5 Q1889 94.7 1890.8 94.7 H1896.2"/><path d="M1883.6 87 H1892.6 M1883.6 90.5 H1892.6"/></g>
<circle cx="1901" cy="82.6" r="4" fill="#f47300"/>
<g fill="none" stroke="#1c1c1c" stroke-width="1.3" stroke-linecap="round" stroke-linejoin="round" stroke-width="1.4"><path d="M1885 151.3 H1881.9 V167 H1894.4 V151.3 H1891.6"/><path d="M1885 153.5 V150.5 H1886.8 Q1888.5 148.8 1890.2 150.5 H1892 V153.5 Z"/><path d="M1884.5 157.5 L1885.7 158.7 L1887.8 156.3 M1884.5 162 L1885.7 163.2 L1887.8 160.8 M1890 158 H1892.5 M1890 162.5 H1892.5"/></g>
<circle cx="1901" cy="148.6" r="4" fill="#f47300"/>
<circle cx="342.5" cy="554.8" r="71.85" fill="none" stroke="#f4511e" stroke-width="23.9"/>
<rect x="341.75" y="469.99999999999994" width="1.5" height="25.4" fill="#fff"/>
<rect x="688.5" y="641.80" width="1128.80" height="1" fill="#e6e6e6"/><rect x="688.5" y="608.46" width="1128.80" height="1" fill="#e6e6e6"/><rect x="688.5" y="575.12" width="1128.80" height="1" fill="#e6e6e6"/><rect x="688.5" y="541.78" width="1128.80" height="1" fill="#e6e6e6"/><rect x="688.5" y="508.44" width="1128.80" height="1" fill="#e6e6e6"/><rect x="688.5" y="475.10" width="1128.80" height="1" fill="#e6e6e6"/><rect x="734.28" y="475.1" width="1" height="176.19999999999993" fill="#e6e6e6"/><rect x="770.37" y="475.1" width="1" height="176.19999999999993" fill="#e6e6e6"/><rect x="806.45" y="475.1" width="1" height="176.19999999999993" fill="#e6e6e6"/><rect x="842.54" y="475.1" width="1" height="176.19999999999993" fill="#e6e6e6"/><rect x="878.62" y="475.1" width="1" height="176.19999999999993" fill="#e6e6e6"/><rect x="914.70" y="475.1" width="1" height="176.19999999999993" fill="#e6e6e6"/><rect x="950.79" y="475.1" width="1" height="176.19999999999993" fill="#e6e6e6"/><rect x="986.87" y="475.1" width="1" height="176.19999999999993" fill="#e6e6e6"/><rect x="1022.95" y="475.1" width="1" height="176.19999999999993" fill="#e6e6e6"/><rect x="1059.04" y="475.1" width="1" height="176.19999999999993" fill="#e6e6e6"/><rect x="1095.12" y="475.1" width="1" height="176.19999999999993" fill="#e6e6e6"/><rect x="1131.21" y="475.1" width="1" height="176.19999999999993" fill="#e6e6e6"/><rect x="1167.29" y="475.1" width="1" height="176.19999999999993" fill="#e6e6e6"/><rect x="1203.37" y="475.1" width="1" height="176.19999999999993" fill="#e6e6e6"/><rect x="1239.46" y="475.1" width="1" height="176.19999999999993" fill="#e6e6e6"/><rect x="1275.54" y="475.1" width="1" height="176.19999999999993" fill="#e6e6e6"/><rect x="1311.63" y="475.1" width="1" height="176.19999999999993" fill="#e6e6e6"/><rect x="1347.71" y="475.1" width="1" height="176.19999999999993" fill="#e6e6e6"/><rect x="1383.79" y="475.1" width="1" height="176.19999999999993" fill="#e6e6e6"/><rect x="1419.88" y="475.1" width="1" height="176.19999999999993" fill="#e6e6e6"/><rect x="1455.96" y="475.1" width="1" height="176.19999999999993" fill="#e6e6e6"/><rect x="1492.05" y="475.1" width="1" height="176.19999999999993" fill="#e6e6e6"/><rect x="1528.13" y="475.1" width="1" height="176.19999999999993" fill="#e6e6e6"/><rect x="1564.21" y="475.1" width="1" height="176.19999999999993" fill="#e6e6e6"/><rect x="1600.30" y="475.1" width="1" height="176.19999999999993" fill="#e6e6e6"/><rect x="1636.38" y="475.1" width="1" height="176.19999999999993" fill="#e6e6e6"/><rect x="1672.46" y="475.1" width="1" height="176.19999999999993" fill="#e6e6e6"/><rect x="1708.55" y="475.1" width="1" height="176.19999999999993" fill="#e6e6e6"/><rect x="1744.63" y="475.1" width="1" height="176.19999999999993" fill="#e6e6e6"/><rect x="1780.72" y="475.1" width="1" height="176.19999999999993" fill="#e6e6e6"/><rect x="1816.80" y="475.1" width="1" height="176.19999999999993" fill="#e6e6e6"/><rect x="698.2" y="475.1" width="1" height="176.69999999999993" fill="#9a9a9a"/><rect x="688.5" y="641.8" width="1128.8" height="1" fill="#a0a0a0"/>
<rect x="709.04" y="640.30" width="15.4" height="2.30" fill="#29c4e1"/>
<text x="716.74" y="661" font-family="Liberation Sans" font-size="10" text-anchor="middle" fill="#444">01</text>
<rect x="745.13" y="640.30" width="15.4" height="2.30" fill="#29c4e1"/>
<text x="752.83" y="661" font-family="Liberation Sans" font-size="10" text-anchor="middle" fill="#444">02</text>
<rect x="781.21" y="640.30" width="15.4" height="2.30" fill="#29c4e1"/>
<text x="788.91" y="661" font-family="Liberation Sans" font-size="10" text-anchor="middle" fill="#444">03</text>
<rect x="817.29" y="640.30" width="15.4" height="2.30" fill="#29c4e1"/>
<text x="824.99" y="661" font-family="Liberation Sans" font-size="10" text-anchor="middle" fill="#444">04</text>
<rect x="853.38" y="475.60" width="15.4" height="167.00" fill="#29c4e1"/>
<rect x="853.38" y="475.60" width="15.4" height="1.6" fill="#3ec88b"/>
<text x="861.08" y="661" font-family="Liberation Sans" font-size="10" text-anchor="middle" fill="#444">05</text>
<rect x="889.46" y="532.30" width="15.4" height="110.30" fill="#29c4e1"/>
<rect x="889.46" y="532.30" width="15.4" height="1.6" fill="#3ec88b"/>
<text x="897.16" y="661" font-family="Liberation Sans" font-size="10" text-anchor="middle" fill="#444">06</text>
<rect x="925.55" y="640.30" width="15.4" height="2.30" fill="#29c4e1"/>
<text x="933.25" y="661" font-family="Liberation Sans" font-size="10" text-anchor="middle" fill="#444">07</text>
<rect x="961.63" y="640.30" width="15.4" height="2.30" fill="#29c4e1"/>
<text x="969.33" y="661" font-family="Liberation Sans" font-size="10" text-anchor="middle" fill="#444">08</text>
<rect x="997.71" y="640.30" width="15.4" height="2.30" fill="#29c4e1"/>
<text x="1005.41" y="661" font-family="Liberation Sans" font-size="10" text-anchor="middle" fill="#444">09</text>
<rect x="1033.80" y="640.30" width="15.4" height="2.30" fill="#29c4e1"/>
<text x="1041.50" y="661" font-family="Liberation Sans" font-size="10" text-anchor="middle" fill="#444">10</text>
<rect x="1069.88" y="640.30" width="15.4" height="2.30" fill="#29c4e1"/>
<text x="1077.58" y="661" font-family="Liberation Sans" font-size="10" text-anchor="middle" fill="#444">11</text>
<rect x="1105.96" y="640.30" width="15.4" height="2.30" fill="#29c4e1"/>
<text x="1113.66" y="661" font-family="Liberation Sans" font-size="10" text-anchor="middle" fill="#444">12</text>
<rect x="1142.05" y="640.30" width="15.4" height="2.30" fill="#29c4e1"/>
<text x="1149.75" y="661" font-family="Liberation Sans" font-size="10" text-anchor="middle" fill="#444">13</text>
<rect x="1178.13" y="640.30" width="15.4" height="2.30" fill="#29c4e1"/>
<text x="1185.83" y="661" font-family="Liberation Sans" font-size="10" text-anchor="middle" fill="#444">14</text>
<rect x="1214.22" y="640.30" width="15.4" height="2.30" fill="#29c4e1"/>
<text x="1221.92" y="661" font-family="Liberation Sans" font-size="10" text-anchor="middle" fill="#444">15</text>
<rect x="1250.30" y="640.30" width="15.4" height="2.30" fill="#29c4e1"/>
<text x="1258.00" y="661" font-family="Liberation Sans" font-size="10" text-anchor="middle" fill="#444">16</text>
<rect x="1286.38" y="640.30" width="15.4" height="2.30" fill="#29c4e1"/>
<text x="1294.08" y="661" font-family="Liberation Sans" font-size="10" text-anchor="middle" fill="#444">17</text>
<rect x="1322.47" y="640.30" width="15.4" height="2.30" fill="#29c4e1"/>
<text x="1330.17" y="661" font-family="Liberation Sans" font-size="10" text-anchor="middle" fill="#444">18</text>
<rect x="1358.55" y="640.30" width="15.4" height="2.30" fill="#29c4e1"/>
<text x="1366.25" y="661" font-family="Liberation Sans" font-size="10" text-anchor="middle" fill="#444">19</text>
<rect x="1394.64" y="640.30" width="15.4" height="2.30" fill="#29c4e1"/>
<text x="1402.34" y="661" font-family="Liberation Sans" font-size="10" text-anchor="middle" fill="#444">20</text>
<rect x="1430.72" y="640.30" width="15.4" height="2.30" fill="#29c4e1"/>
<text x="1438.42" y="661" font-family="Liberation Sans" font-size="10" text-anchor="middle" fill="#444">21</text>
<rect x="1466.80" y="622.00" width="15.4" height="20.60" fill="#29c4e1"/>
<rect x="1466.80" y="622.00" width="15.4" height="1.6" fill="#3ec88b"/>
<text x="1474.50" y="661" font-family="Liberation Sans" font-size="10" text-anchor="middle" fill="#444">22</text>
<rect x="1502.89" y="640.30" width="15.4" height="2.30" fill="#29c4e1"/>
<text x="1510.59" y="661" font-family="Liberation Sans" font-size="10" text-anchor="middle" fill="#444">23</text>
<rect x="1538.97" y="640.30" width="15.4" height="2.30" fill="#29c4e1"/>
<text x="1546.67" y="661" font-family="Liberation Sans" font-size="10" text-anchor="middle" fill="#444">24</text>
<rect x="1575.05" y="640.30" width="15.4" height="2.30" fill="#29c4e1"/>
<text x="1582.75" y="661" font-family="Liberation Sans" font-size="10" text-anchor="middle" fill="#444">25</text>
<rect x="1611.14" y="640.30" width="15.4" height="2.30" fill="#29c4e1"/>
<text x="1618.84" y="661" font-family="Liberation Sans" font-size="10" text-anchor="middle" fill="#444">26</text>
<rect x="1647.22" y="640.30" width="15.4" height="2.30" fill="#29c4e1"/>
<text x="1654.92" y="661" font-family="Liberation Sans" font-size="10" text-anchor="middle" fill="#444">27</text>
<rect x="1683.31" y="640.30" width="15.4" height="2.30" fill="#29c4e1"/>
<text x="1691.01" y="661" font-family="Liberation Sans" font-size="10" text-anchor="middle" fill="#444">28</text>
<rect x="1719.39" y="640.30" width="15.4" height="2.30" fill="#29c4e1"/>
<text x="1727.09" y="661" font-family="Liberation Sans" font-size="10" text-anchor="middle" fill="#444">29</text>
<rect x="1755.47" y="640.30" width="15.4" height="2.30" fill="#29c4e1"/>
<text x="1763.17" y="661" font-family="Liberation Sans" font-size="10" text-anchor="middle" fill="#444">30</text>
<rect x="1791.56" y="640.30" width="15.4" height="2.30" fill="#29c4e1"/>
<text x="1799.26" y="661" font-family="Liberation Sans" font-size="10" text-anchor="middle" fill="#444">31</text>
<text x="688.4" y="646.10" font-family="Liberation Sans" font-size="11" text-anchor="end" fill="#444">0</text>
<text x="688.4" y="612.76" font-family="Liberation Sans" font-size="11" text-anchor="end" fill="#444">1.3tr</text>
<text x="688.4" y="579.42" font-family="Liberation Sans" font-size="11" text-anchor="end" fill="#444">2.6tr</text>
<text x="688.4" y="546.08" font-family="Liberation Sans" font-size="11" text-anchor="end" fill="#444">3.9tr</text>
<text x="688.4" y="512.74" font-family="Liberation Sans" font-size="11" text-anchor="end" fill="#444">5.2tr</text>
<text x="688.4" y="479.40" font-family="Liberation Sans" font-size="11" text-anchor="end" fill="#444">6.5tr</text>
<circle cx="342.3" cy="861.6" r="71.9" fill="none" stroke="#e67c73" stroke-width="23.799999999999997"/>
<rect x="341.55" y="776.8000000000001" width="1.5" height="25.299999999999997" fill="#fff"/>
<circle cx="440.3" cy="785.7" r="4.1" fill="#d50000"/>
<circle cx="440.3" cy="823.9" r="4.1" fill="#e67c73"/>
<rect x="685" y="947.80" width="1132.40" height="1" fill="#e3e3e3"/><rect x="685" y="914.60" width="1132.40" height="1" fill="#e3e3e3"/><rect x="685" y="881.60" width="1132.40" height="1" fill="#e3e3e3"/><rect x="685" y="848.10" width="1132.40" height="1" fill="#e3e3e3"/><rect x="685" y="814.80" width="1132.40" height="1" fill="#e3e3e3"/><rect x="685" y="781.80" width="1132.40" height="1" fill="#e3e3e3"/><rect x="1816.9" y="782" width="1" height="170" fill="#e3e3e3"/><rect x="694.9" y="782" width="1" height="170" fill="#9a9a9a"/>
<text x="685" y="952.10" font-family="Liberation Sans" font-size="11" text-anchor="end" fill="#444">0</text>
<text x="685" y="918.90" font-family="Liberation Sans" font-size="11" text-anchor="end" fill="#444">3tr</text>
<text x="685" y="885.90" font-family="Liberation Sans" font-size="11" text-anchor="end" fill="#444">6tr</text>
<text x="685" y="852.40" font-family="Liberation Sans" font-size="11" text-anchor="end" fill="#444">9tr</text>
<text x="685" y="819.10" font-family="Liberation Sans" font-size="11" text-anchor="end" fill="#444">12tr</text>
<text x="685" y="786.10" font-family="Liberation Sans" font-size="11" text-anchor="end" fill="#444">15tr</text>
<rect x="1248.6" y="822.3" width="15.3" height="130" fill="#3d85f6"/>
</svg>
<div style="position:absolute;left:0;top:948px;width:1917px;height:3px;background:#fdfdfd"></div>
<div style="position:absolute;left:0;top:0;width:1917px;height:948px;box-sizing:border-box;border:2px solid #b4b4b4;"></div>
</body></html>
